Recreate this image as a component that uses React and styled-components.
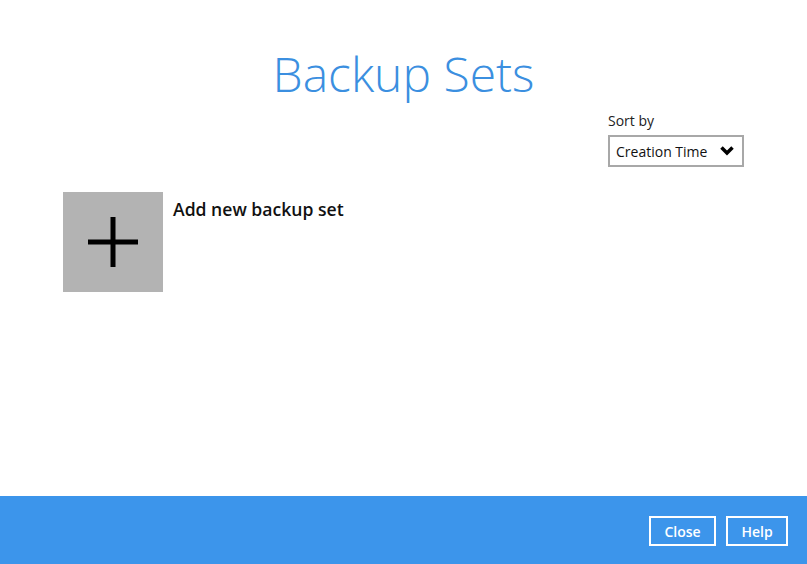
import styled, { createGlobalStyle } from 'styled-components';

const GlobalStyle = createGlobalStyle`
  html, body {
    margin: 0;
    padding: 0;
    height: 100%;
    background: #fff;
    font-family: "Open Sans", "Noto Sans", sans-serif;
  }
  #root {
    height: 100%;
  }
`;

const Page = styled.div`
  height: 564px;
  display: flex;
  flex-direction: column;
`;

const Content = styled.main`
  flex: 1;
  padding: 0 63px;
  display: flex;
  flex-direction: column;
`;

const Title = styled.h1`
  margin: 41px 0 0;
  text-align: center;
  font-weight: 300;
  font-size: 48px;
  line-height: 66px;
  color: #3b8fe0;
`;

const SortRow = styled.div`
  display: flex;
  justify-content: flex-end;
  margin-top: 4px;
`;

const SortBox = styled.div`
  display: flex;
  flex-direction: column;
  gap: 4px;
`;

const SortLabel = styled.div`
  font-size: 14px;
  line-height: 20px;
  color: #222;
`;

const Select = styled.div`
  box-sizing: border-box;
  width: 136px;
  height: 32px;
  border: 2px solid #a8a8a8;
  display: flex;
  align-items: center;
  justify-content: space-between;
  padding: 0 8px 0 6px;
  font-size: 14px;
  color: #111;
`;

const TileRow = styled.div`
  display: flex;
  align-items: flex-start;
  gap: 10px;
  margin-top: 25px;
`;

const Tile = styled.div`
  width: 100px;
  height: 100px;
  background: #b3b3b3;
  display: flex;
  align-items: center;
  justify-content: center;
`;

const TileLabel = styled.div`
  font-size: 17.6px;
  font-weight: 600;
  color: #111;
  margin-top: 5px;
`;

const Footer = styled.footer`
  height: 68px;
  background: #3c95eb;
  display: flex;
  align-items: center;
  justify-content: flex-end;
  gap: 10px;
  padding-right: 19px;
`;

const FooterButton = styled.button`
  box-sizing: border-box;
  height: 30px;
  width: ${p => p.$w}px;
  background: transparent;
  border: 2px solid #fff;
  color: #fff;
  font-family: "Open Sans", sans-serif;
  font-weight: 600;
  font-size: 14px;
  padding: 0;
  margin-top: 2px;
`;

export default function App() {
  return (
    <Page>
      <GlobalStyle />
      <Content>
        <Title>Backup Sets</Title>
        <SortRow>
          <SortBox>
            <SortLabel>Sort by</SortLabel>
            <Select>
              <span>Creation Time</span>
              <svg width="14" height="10" viewBox="0 0 14 10">
                <path d="M1.5 1.5 L7 7 L12.5 1.5" fill="none" stroke="#000" strokeWidth="3.5" />
              </svg>
            </Select>
          </SortBox>
        </SortRow>
        <TileRow>
          <Tile>
            <svg width="50" height="50" viewBox="0 0 50 50">
              <rect x="0" y="22.5" width="50" height="5" fill="#000" />
              <rect x="22.5" y="0" width="5" height="50" fill="#000" />
            </svg>
          </Tile>
          <TileLabel>Add new backup set</TileLabel>
        </TileRow>
      </Content>
      <Footer>
        <FooterButton $w={67}>Close</FooterButton>
        <FooterButton $w={62}>Help</FooterButton>
      </Footer>
    </Page>
  );
}
